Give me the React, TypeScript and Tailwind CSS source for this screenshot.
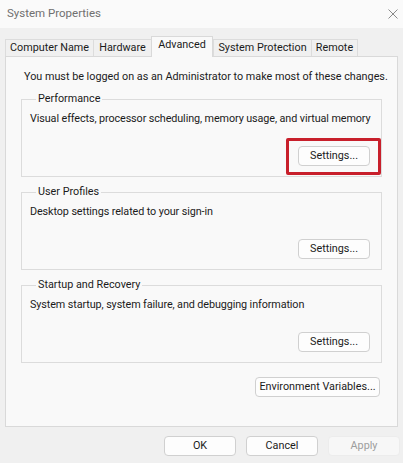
import React from "react";

const font = { fontFamily: 'Roboto, "Liberation Sans", Arial, sans-serif' };

function Btn({ label, w, disabled }: { label: string; w: string; disabled?: boolean }) {
  return (
    <div
      className={
        disabled
          ? `${w} h-[20px] flex items-center justify-center whitespace-nowrap rounded-[4px] border border-[#ececec] bg-[#f7f7f7] text-[#9d9d9d] text-[10.8px] leading-[16px]`
          : `${w} h-[20px] flex items-center justify-center whitespace-nowrap rounded-[4px] border border-[#d0d0d0] bg-[#fdfdfd] text-[#1b1b1b] text-[10.8px] leading-[16px]`
      }
    >
      {label}
    </div>
  );
}

function Group({
  title,
  desc,
  highlight,
}: {
  title: string;
  desc: string;
  highlight?: boolean;
}) {
  return (
    <fieldset className="min-w-0 border border-[#dcdcdc] mx-[15px] pl-[8px] pr-[11px] pb-[10px]">
      <legend className="ml-[6px] px-[2px] text-[10.8px] leading-[16px] text-[#1b1b1b] whitespace-nowrap">{title}</legend>
      <div className="mt-[4px] text-[10.8px] leading-[16px] text-[#1b1b1b] whitespace-nowrap tracking-[-0.1px]">{desc}</div>
      <div className="mt-[19px] flex justify-end">
        <div className="relative">
          <Btn label="Settings..." w="w-[72px]" />
          {highlight && (
            <div className="absolute -left-[12px] -right-[11px] -top-[8px] -bottom-[9px] border-[3px] border-[#c81f2b] rounded-[2px]" />
          )}
        </div>
      </div>
    </fieldset>
  );
}

export default function App() {
  const tabs = [
    { label: "Computer Name", w: "w-[88px]" },
    { label: "Hardware", w: "w-[58px]" },
    { label: "Advanced", w: "w-[62px]", sel: true },
    { label: "System Protection", w: "w-[98px]" },
    { label: "Remote", w: "w-[47px]" },
  ];
  return (
    <div className="w-[403px] h-[463px] bg-[#f0f0f0] flex flex-col overflow-hidden" style={font}>
      <div className="h-[28px] bg-[#fafafa] flex items-center justify-between pl-[7px] pr-[5px]">
        <span className="text-[11.5px] text-[#707070]">System Properties</span>
        <svg width="10" height="10" viewBox="0 0 10 10">
          <path d="M0.5 0.5 L9.5 9.5 M9.5 0.5 L0.5 9.5" stroke="#8a8a8a" strokeWidth="1" fill="none" />
        </svg>
      </div>
      <div className="px-[5px] pt-[8px]">
        <div className="flex items-end h-[20px] relative z-10">
          {tabs.map((t) =>
            t.sel ? (
              <div
                key={t.label}
                className={`${t.w} h-[21px] -mb-[1px] border border-b-0 border-[#d9d9d9] bg-[#f9f9f9] flex items-center justify-center whitespace-nowrap text-[10.8px] text-[#1b1b1b] pb-[3px]`}
              >
                {t.label}
              </div>
            ) : (
              <div
                key={t.label}
                className={`${t.w} h-[17px] border border-b-0 border-r-0 last:border-r border-[#dcdcdc] bg-[#f0f0f0] flex items-center justify-center whitespace-nowrap text-[10.8px] text-[#1b1b1b]`}
              >
                {t.label}
              </div>
            )
          )}
        </div>
        <div className="h-[371px] border border-[#d9d9d9] bg-[#f9f9f9] pt-[12px] flex flex-col">
          <div className="pl-[18px] text-[10.8px] leading-[16px] text-[#1b1b1b] whitespace-nowrap">
            You must be logged on as an Administrator to make most of these changes.
          </div>
          <div className="mt-[6px] flex flex-col gap-[7px]">
            <Group
              title="Performance"
              desc="Visual effects, processor scheduling, memory usage, and virtual memory"
              highlight
            />
            <Group title="User Profiles" desc="Desktop settings related to your sign-in" />
            <Group
              title="Startup and Recovery"
              desc="System startup, system failure, and debugging information"
            />
          </div>
          <div className="mt-[14px] flex justify-end pr-[17px]">
            <Btn label="Environment Variables..." w="w-[125px]" />
          </div>
        </div>
        <div className="mt-[9px] flex justify-end gap-[10px] mr-[-2px]">
          <Btn label="OK" w="w-[72px]" />
          <Btn label="Cancel" w="w-[72px]" />
          <Btn label="Apply" w="w-[72px]" disabled />
        </div>
      </div>
    </div>
  );
}
